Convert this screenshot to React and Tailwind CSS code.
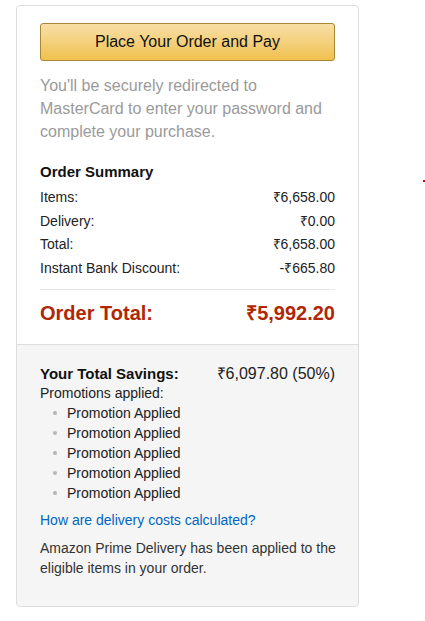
import React from 'react'

const rows = [
  ['Items:', '₹6,658.00'],
  ['Delivery:', '₹0.00'],
  ['Total:', '₹6,658.00'],
  ['Instant Bank Discount:', '-₹665.80'],
]

export default function App() {
  return (
    <div
      className="relative min-h-[621px] bg-white pl-[16px] pt-[5px]"
      style={{ fontFamily: '"Liberation Sans", Arial, sans-serif' }}
    >
      {/* stray red mark at the right edge */}
      <span className="absolute left-[423px] top-[180px] h-[2px] w-[2px] bg-[#e00000]" />

      <div className="w-[343px] overflow-hidden rounded-[4px] border border-[#dddddd]">
        {/* Top */}
        <div className="px-[23px] pt-[17px] pb-[19px]">
          <button
            type="button"
            className="h-[38px] w-full rounded-[3px] border border-[#a88734] bg-gradient-to-b from-[#f7dfa5] to-[#f0c14b] text-[16px] text-[#111]"
          >
            Place Your Order and Pay
          </button>

          <p className="mt-[13px] text-[16px] leading-[23px] text-[#9a9a9a]">
            You'll be securely redirected to MasterCard to enter your password and complete your purchase.
          </p>

          <p className="mt-[18px] text-[15px] font-bold leading-[22px] text-[#111]">Order Summary</p>
          <div className="mt-[3px]">
            {rows.map(([label, value]) => (
              <div key={label} className="flex justify-between text-[14px] leading-[23.5px] text-[#222]">
                <span>{label}</span>
                <span>{value}</span>
              </div>
            ))}
          </div>

          <div className="mt-[9px] border-t border-[#e7e7e7]" />

          <div className="mt-[11px] flex justify-between text-[20px] font-bold leading-[24px] text-[#B12704]">
            <span>Order Total:</span>
            <span>₹5,992.20</span>
          </div>
        </div>

        {/* Savings */}
        <div className="border-t border-[#dddddd] bg-[#f5f5f5] px-[23px] pt-[19px] pb-[28px] text-[14px] text-[#222]">
          <div className="flex justify-between leading-[19px]">
            <span className="text-[15px] font-bold text-[#111]">Your Total Savings:</span>
            <span className="text-[16px]">₹6,097.80 (50%)</span>
          </div>
          <p className="leading-[20px]">Promotions applied:</p>
          <ul className="pl-[13px]">
            {[0, 1, 2, 3, 4].map((i) => (
              <li key={i} className="flex items-center leading-[20px]">
                <span className="mr-[10px] h-[4px] w-[4px] rounded-full bg-[#b5b5b5]" />
                Promotion Applied
              </li>
            ))}
          </ul>
          <a href="#" className="mt-[7px] block leading-[20px] text-[#0066c0]">
            How are delivery costs calculated?
          </a>
          <p className="mt-[8px] mr-[-10px] leading-[20px] text-[#333]">
            Amazon Prime Delivery has been applied to the eligible items in your order.
          </p>
        </div>
      </div>
    </div>
  )
}
